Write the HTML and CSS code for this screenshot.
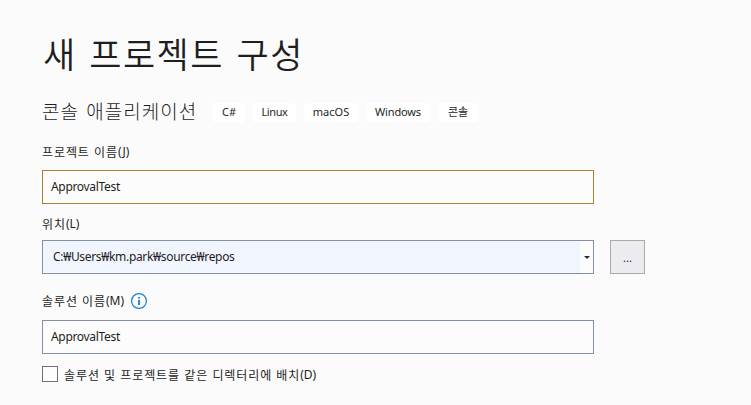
FILE: index.html
```html
<!DOCTYPE html>
<html lang="ko">
<head>
<meta charset="utf-8">
<title>새 프로젝트 구성</title>
<link rel="stylesheet" href="styles.css">
</head>
<body>
<main class="page">
  <h1 class="title">새 프로젝트 구성</h1>
  <div class="template">
    <h2 class="template-name">콘솔 애플리케이션</h2>
    <ul class="tags">
      <li class="tag tag-cs">C#</li>
      <li class="tag tag-linux">Linux</li>
      <li class="tag tag-mac">macOS</li>
      <li class="tag tag-win">Windows</li>
      <li class="tag tag-console">콘솔</li>
    </ul>
  </div>
  <div class="label label-project"><span class="ko">프로젝트 이름</span><span class="key">(J)</span></div>
  <div class="field field-active"><span class="value">ApprovalTest</span></div>
  <div class="label label-location"><span class="ko">위치</span><span class="key">(L)</span></div>
  <div class="location">
    <div class="field combo">
      <span class="value path">C:₩Users₩km.park₩source₩repos</span>
      <span class="drop"><svg width="6" height="3" viewBox="0 0 6 3"><path d="M0 0h6L3 3z" fill="#1e2a44"/></svg></span>
    </div>
    <button class="browse">...</button>
  </div>
  <div class="label label-solution"><span class="ko">솔루션 이름</span><span class="key">(M)</span>
    <svg class="info" width="16" height="16" viewBox="0 0 16 16"><circle cx="8" cy="8" r="7.4" fill="none" stroke="#1a80d0" stroke-width="1.2"/><path d="M7.1 4h1.8v1.6H7.1zM7.1 6.8h1.8V12H7.1z" fill="#1a80d0"/></svg>
  </div>
  <div class="field"><span class="value">ApprovalTest</span></div>
  <label class="check"><span class="box"></span><span class="ko">솔루션 및 프로젝트를 같은 디렉터리에 배치</span><span class="key">(D)</span></label>
</main>
</body>
</html>
```

FILE: styles.css
```css
* { box-sizing: border-box; }
body {
  margin: 0;
  background: #fbfbfb;
  color: #1e1e1e;
  font-family: "Noto Sans", "Noto Sans CJK KR", sans-serif;
  font-size: 12px;
  overflow: hidden;
}
.page { width: 751px; height: 405px; padding: 30px 42px 0; display: flex; flex-direction: column; }
.title {
  margin: 0; height: 52px; line-height: 46px; padding-left: 1px;
  font-family: "Noto Sans CJK KR", sans-serif;
  font-weight: 350; font-size: 35px; letter-spacing: 1.5px; word-spacing: 1.2px;
  white-space: nowrap;
}
.template { display: flex; align-items: center; height: 60px; }
.template-name {
  margin: 0; width: 171px; font-family: "Noto Sans CJK KR", sans-serif;
  font-weight: 300; font-size: 19px; line-height: 26px; padding-bottom: 2px;
  letter-spacing: 1px; word-spacing: 1px; white-space: nowrap;
}
.tags { display: flex; gap: 8px; margin: 0; padding: 0; list-style: none; }
.tag {
  height: 19px; line-height: 18px; border-radius: 3px; background: #fff;
  text-align: center; font-size: 11px; white-space: nowrap;
}
.tag-cs { width: 32px; }
.tag-linux { width: 43px; letter-spacing: -0.4px; }
.tag-mac { width: 54px; }
.tag-win { width: 64px; letter-spacing: -0.15px; }
.tag-console { width: 40px; }
.label { display: flex; align-items: center; white-space: nowrap; }
.ko { font-family: "Noto Sans CJK KR", sans-serif; font-size: 12px; letter-spacing: 0.9px; }
.label-project { height: 28px; padding-bottom: 10px; }
.label-location { height: 36px; padding-top: 2px; }
.label-solution { height: 46px; padding-top: 6px; }
.info { margin-left: 7px; margin-top: 1px; }
.field {
  width: 552px; height: 34px; flex: none; border: 1px solid #8490a8; background: #fcfcfc;
  display: flex; align-items: center; padding-left: 8px;
}
.field-active { border-color: #a98230; }
.value { line-height: 18px; white-space: nowrap; letter-spacing: -0.32px; }
.location { display: flex; gap: 16px; }
.combo { background: #f1f5fe; padding-left: 10px; }
.drop {
  margin-left: auto; width: 13px; height: 32px; background: #fcfcfc;
  display: flex; align-items: center; justify-content: center;
}
.browse {
  width: 35px; height: 34px; padding: 2px 0 0; border: 1px solid #aaa; background: #ecebf0;
  font: 11px/20px "Noto Sans", sans-serif; color: #1e1e1e;
}
.check { display: flex; align-items: center; height: 40px; white-space: nowrap; }
.box { width: 16px; height: 16px; border: 1px solid #717171; background: #fdfdfd; margin-right: 6px; }
```
